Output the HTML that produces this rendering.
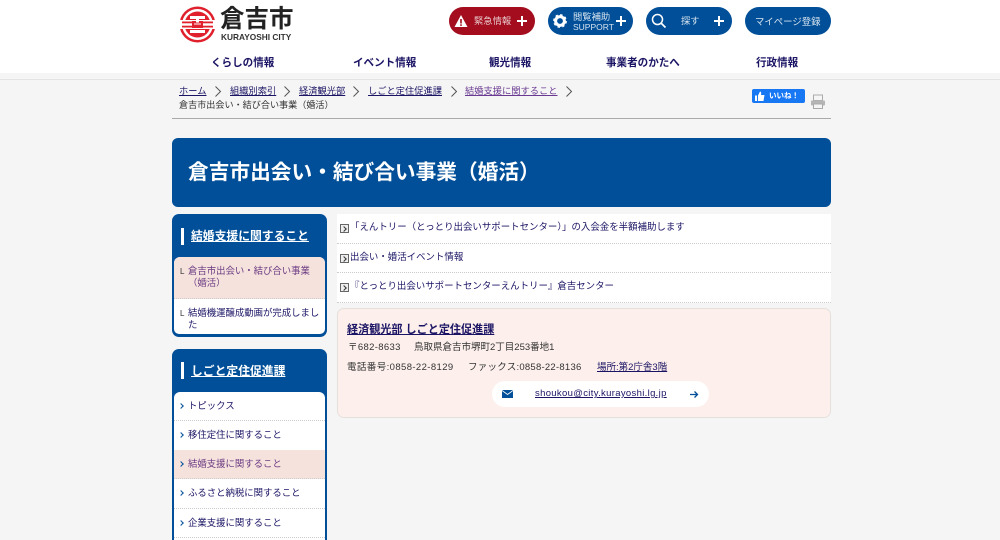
<!DOCTYPE html>
<html lang="ja"><head><meta charset="utf-8"><title>倉吉市出会い・結び合い事業（婚活）</title>
<style>
html,body{margin:0;padding:0;height:540px;overflow:hidden}
body{width:1000px;position:relative;background:#f5f5f5;font-family:"Liberation Sans","Noto Sans CJK JP",sans-serif;color:#333}
.a{position:absolute;white-space:nowrap;line-height:1}
.btn{position:absolute;top:7px;height:28px;border-radius:14px;background:#004f98;color:#d5e2ef;font-size:9.5px}
.plus{position:absolute;top:16px;width:10px;height:10px;background:linear-gradient(#fff,#fff) center/100% 2px no-repeat,linear-gradient(#fff,#fff) center/2px 100% no-repeat}
.nav{position:absolute;top:57px;font-size:10.550px;font-weight:bold;color:#1b1464;line-height:12px;white-space:nowrap}
.bc{position:absolute;top:86px;font-size:9.250px;line-height:11px;color:#1b1464;text-decoration:underline;white-space:nowrap}
.side{position:absolute;left:172px;width:155px;background:#004f98;border-radius:7px}
.st{position:absolute;left:19px;color:#fff;font-size:11.800px;font-weight:bold;text-decoration:underline;line-height:14px;white-space:nowrap}
.bar{position:absolute;left:9px;width:3px;height:17px;background:#fff}
.box{position:absolute;left:2px;width:151px;background:#fff;border-radius:6px 6px 5px 5px;overflow:hidden}
.it{position:absolute;left:0;width:151px;font-size:9.400px;color:#1b1464;line-height:12px;border-bottom:1px dotted #ccc;box-sizing:border-box}
.it span{position:absolute;left:14px;white-space:nowrap}
.it b{position:absolute;left:5px;top:12px;width:3px;height:3px;border-top:1.300px solid #004f98;border-right:1.300px solid #004f98;transform:rotate(45deg)}
.it u{position:absolute;left:6px;top:10px;font-size:8px;line-height:9px;text-decoration:none;color:#333}
.cur{background:#f5e2dd}
.ln{position:absolute;left:337px;width:494px;height:29px;background:#fff;border-bottom:1px dotted #ccc;box-sizing:border-box;font-size:9.450px;line-height:12px;color:#1b1464}
.ln i{position:absolute;left:3px;top:10px;width:7px;height:7px;border:1px solid #666;background:#eee}
.ln i:after{content:"";position:absolute;left:1px;top:1.500px;width:3px;height:3px;border-top:1px solid #333;border-right:1px solid #333;transform:rotate(45deg)}
.ln span{position:absolute;left:13px;top:7.500px;white-space:nowrap}
.t{font-size:9.500px;line-height:12px;color:#333}
</style></head><body>
<div class="a" style="left:0;top:0;width:1000px;height:73px;background:#fff"></div>
<div class="a" style="left:0;top:79px;width:1000px;height:1px;background:#e3e3e3"></div>

<svg class="a" style="left:179px;top:6px" width="37" height="37" viewBox="0 0 37 37"><circle cx="18.500" cy="18.500" r="18" fill="#e0202c"/><circle cx="18.500" cy="18.500" r="15.500" fill="#fff"/><circle cx="18.500" cy="18.500" r="13" fill="#e0202c"/><rect x="0" y="14" width="37" height="9" fill="#fff"/><rect x="3" y="15.500" width="31" height="1.800" fill="#e0202c"/><rect x="3" y="19.700" width="31" height="1.800" fill="#e0202c"/><rect x="11" y="10" width="15" height="3" fill="#fff"/><rect x="11" y="24" width="15" height="3" fill="#fff"/><rect x="13" y="15" width="11" height="7" fill="#e0202c"/><rect x="17" y="12.500" width="3" height="4" fill="#fff"/><rect x="15" y="17.500" width="7" height="1" fill="#fff"/></svg>
<div class="a" style="left:220px;top:7px;font-size:24.500px;font-weight:bold;color:#222;line-height:26px">倉吉市</div>
<div class="a" style="left:221px;top:33px;font-size:8.300px;font-weight:bold;color:#333;line-height:9px">KURAYOSHI CITY</div>

<div class="btn" style="left:449px;width:86px;background:#a30d1e"></div>
<svg class="a" style="left:454px;top:14px" width="14" height="14" viewBox="0 0 14 14"><path d="M7 1L13.500 13H.5z" fill="#fff"/><rect x="6.200" y="5" width="1.600" height="4.500" fill="#a30d1e"/><rect x="6.200" y="10.300" width="1.600" height="1.600" fill="#a30d1e"/></svg>
<div class="a" style="left:474px;top:16.500px;font-size:9.300px;color:#e9c9cc">緊急情報</div>
<div class="plus" style="left:517px"></div>

<div class="btn" style="left:548px;width:85px"></div>
<svg class="a" style="left:553px;top:14px" width="14" height="14" viewBox="0 0 14 14"><circle cx="7" cy="7" r="4.400" fill="none" stroke="#fff" stroke-width="3"/><circle cx="7" cy="7" r="6" fill="none" stroke="#fff" stroke-width="1.800" stroke-dasharray="2.400 2.300"/></svg>
<div class="a" style="left:573px;top:11.500px;font-size:9.300px;color:#d5e2ef;line-height:10px">閲覧補助</div>
<div class="a" style="left:573px;top:22px;font-size:8.500px;color:#d5e2ef;line-height:10px">SUPPORT</div>
<div class="plus" style="left:616px"></div>

<div class="btn" style="left:646px;width:86px"></div>
<svg class="a" style="left:651px;top:13px" width="16" height="16" viewBox="0 0 16 16"><circle cx="6.500" cy="6.500" r="5" fill="none" stroke="#fff" stroke-width="1.500"/><path d="M10 10l4.500 4.500" stroke="#fff" stroke-width="1.700"/></svg>
<div class="a" style="left:681px;top:16.500px;font-size:9.300px;color:#d5e2ef">探す</div>
<div class="plus" style="left:714px"></div>

<div class="btn" style="left:745px;width:86px"></div>
<div class="a" style="left:755px;top:16.500px;font-size:9.400px;color:#d5e2ef">マイページ登録</div>

<div class="nav" style="left:211px">くらしの情報</div>
<div class="nav" style="left:353px">イベント情報</div>
<div class="nav" style="left:489px">観光情報</div>
<div class="nav" style="left:606px">事業者のかたへ</div>
<div class="nav" style="left:756px">行政情報</div>

<div class="bc" style="left:179px">ホーム</div>
<div class="bc" style="left:230px">組織別索引</div>
<div class="bc" style="left:299px">経済観光部</div>
<div class="bc" style="left:368px">しごと定住促進課</div>
<div class="bc" style="left:465px;color:#6a3a92">結婚支援に関すること</div>
<svg class="a" style="left:214px;top:86px" width="8" height="11"><path d="M1.500 .5l5 5-5 5" fill="none" stroke="#555"/></svg>
<svg class="a" style="left:283px;top:86px" width="8" height="11"><path d="M1.500 .5l5 5-5 5" fill="none" stroke="#555"/></svg>
<svg class="a" style="left:352px;top:86px" width="8" height="11"><path d="M1.500 .5l5 5-5 5" fill="none" stroke="#555"/></svg>
<svg class="a" style="left:450px;top:86px" width="8" height="11"><path d="M1.500 .5l5 5-5 5" fill="none" stroke="#555"/></svg>
<svg class="a" style="left:565px;top:86px" width="8" height="11"><path d="M1.500 .5l5 5-5 5" fill="none" stroke="#555"/></svg>
<div class="a" style="left:179px;top:99.500px;font-size:9.100px;line-height:11px;color:#333">倉吉市出会い・結び合い事業（婚活）</div>

<div class="a" style="left:752px;top:89px;width:53px;height:14px;background:#1877f2;border-radius:2px"></div>
<svg class="a" style="left:755px;top:91px" width="10" height="10" viewBox="0 0 10 10"><path d="M0 4.500h2V10H0zM3 4.500L5 .5c1 0 1.500.8 1 3.500h3.500L8.500 10H3z" fill="#fff"/></svg>
<div class="a" style="left:769px;top:91px;font-size:7.500px;font-weight:bold;color:#fff;line-height:10px">いいね！</div>
<svg class="a" style="left:810px;top:94px" width="16" height="16" viewBox="0 0 16 16"><rect x="3.500" y="1" width="9" height="5.500" fill="#f5f5f5" stroke="#aaa"/><rect x="1" y="6.500" width="14" height="5" rx="1" fill="#b5b5b5"/><rect x="3.500" y="10" width="9" height="4.500" fill="#f5f5f5" stroke="#aaa"/></svg>
<div class="a" style="left:172px;top:118px;width:659px;height:1px;background:#aaa"></div>

<div class="a" style="left:172px;top:138px;width:659px;height:69px;background:#004f98;border-radius:6px"></div>
<div class="a" style="left:188px;top:161px;font-size:20.700px;font-weight:bold;color:#fff;line-height:23px">倉吉市出会い・結び合い事業（婚活）</div>

<div class="side" style="top:214px;height:123px">
<div class="bar" style="top:14px"></div><div class="st" style="top:15px">結婚支援に関すること</div>
<div class="box" style="top:43px;height:77px">
<div class="it cur" style="top:0;height:42px"><u>L</u><span style="top:8px;color:#6a3a82">倉吉市出会い・結び合い事業<br>（婚活）</span></div>
<div class="it" style="top:42px;height:35px;border:0"><u>L</u><span style="top:8px">結婚機運醸成動画が完成しまし<br>た</span></div>
</div></div>

<div class="side" style="top:349px;height:191px;border-radius:7px 7px 0 0">
<div class="bar" style="top:13px"></div><div class="st" style="top:15px">しごと定住促進課</div>
<div class="box" style="top:43px;height:160px">
<div class="it" style="top:0;height:29px"><b></b><span style="top:8px">トピックス</span></div>
<div class="it" style="top:29px;height:30px"><b></b><span style="top:8px">移住定住に関すること</span></div>
<div class="it cur" style="top:58px;height:29px"><b></b><span style="top:8px;color:#6a3a82">結婚支援に関すること</span></div>
<div class="it" style="top:87px;height:30px"><b></b><span style="top:8px">ふるさと納税に関すること</span></div>
<div class="it" style="top:117px;height:29px"><b></b><span style="top:8px">企業支援に関すること</span></div>
</div></div>

<div class="ln" style="top:214px;height:30px"><i></i><span>「えんトリー（とっとり出会いサポートセンター）」の入会金を半額補助します</span></div>
<div class="ln" style="top:244px"><i></i><span>出会い・婚活イベント情報</span></div>
<div class="ln" style="top:273px;height:30px"><i></i><span>『とっとり出会いサポートセンターえんトリー』倉吉センター</span></div>

<div class="a" style="left:337px;top:308px;width:494px;height:110px;background:#fdf0ec;border:1px solid #e6e0dc;border-radius:7px;box-sizing:border-box"></div>
<div class="a" style="left:347px;top:323px;font-size:11.100px;font-weight:bold;color:#1b1464;text-decoration:underline;line-height:14px">経済観光部 しごと定住促進課</div>
<div class="a t" style="left:348px;top:342px;letter-spacing:.35px">〒682-8633</div>
<div class="a t" style="left:414px;top:342px">鳥取県倉吉市堺町2丁目253番地1</div>
<div class="a t" style="left:347px;top:362px;letter-spacing:.4px">電話番号:0858-22-8129</div>
<div class="a t" style="left:468px;top:362px;letter-spacing:.25px">ファックス:0858-22-8136</div>
<div class="a t" style="left:597px;top:362px;color:#1b1464;text-decoration:underline">場所:第2庁舎3階</div>
<div class="a" style="left:492px;top:381px;width:217px;height:26px;background:#fff;border-radius:13px"></div>
<svg class="a" style="left:502px;top:390px" width="11" height="8" viewBox="0 0 11 8"><rect width="11" height="8" fill="#004f98"/><path d="M0 .5l5.500 4 5.500-4" fill="none" stroke="#fff" stroke-width=".9"/></svg>
<div class="a t" style="left:535px;top:388px;letter-spacing:.33px;color:#1b1464;text-decoration:underline">shoukou@city.kurayoshi.lg.jp</div>
<svg class="a" style="left:690px;top:390px" width="9" height="9" viewBox="0 0 9 9"><path d="M0 4.500h7.500M4.500 1.500l3 3-3 3" fill="none" stroke="#004f98" stroke-width="1.300"/></svg>
</body></html>
